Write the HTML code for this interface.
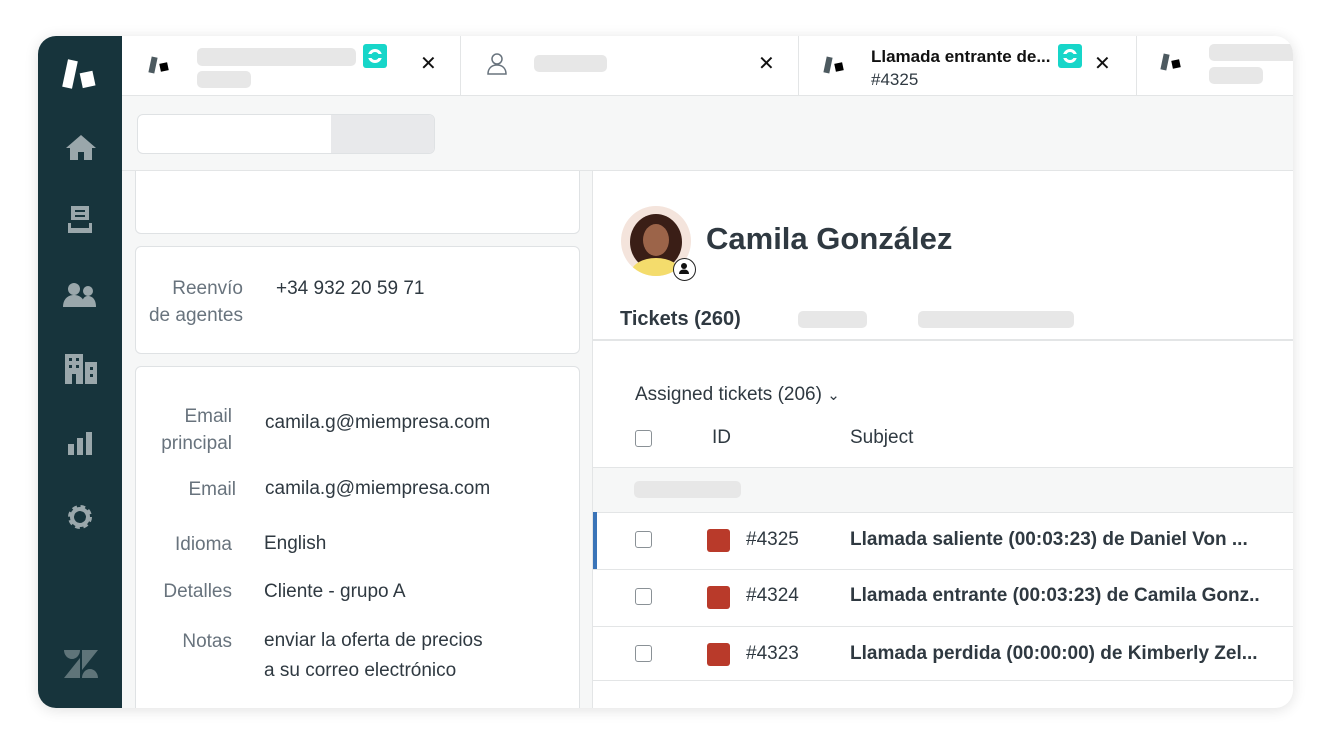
<!DOCTYPE html><html><head><style>
*{margin:0;padding:0;box-sizing:border-box}
body{width:1332px;height:746px;background:#fff;font-family:"Liberation Sans",sans-serif;color:#2f3941;position:relative;overflow:hidden}
.card{position:absolute;left:38px;top:36px;width:1255px;height:672px;border-radius:18px;overflow:hidden;background:#f6f7f7;box-shadow:0 2px 14px rgba(0,0,0,.12)}
.side{position:absolute;left:0;top:0;width:84px;height:672px;background:#17343c;z-index:5}
.abs{position:absolute}
.pill{position:absolute;background:#e7e7e7;border-radius:5px}
.tabs{position:absolute;left:84px;top:0;right:0;height:60px;background:#fff;border-bottom:1px solid #e3e5e6;z-index:4}
.div{position:absolute;top:0;width:1px;height:60px;background:#e3e5e6}
.x{position:absolute;font-size:20px;color:#111}
.lbl{position:absolute;color:#68737d;font-size:19px;text-align:right;line-height:27px}
.val{position:absolute;color:#2f3941;font-size:19px;line-height:30px}
.wc{position:absolute;background:#fff;border:1px solid #dfe2e4;border-radius:6px}
.cb{position:absolute;width:17px;height:17px;border:1.5px solid #8a9196;border-radius:3px;background:#fff}
.red{position:absolute;width:23px;height:23px;background:#b93a2a;border-radius:3px}
.row{position:absolute;left:0;right:0;height:1px;background:#e3e5e6}
.t{position:absolute;font-size:19px;color:#2f3941}
</style></head><body>
<div class="card">
 <div class="side">
  <svg class="abs" style="left:24px;top:22px" width="36" height="34"><rect x="3" y="2" width="10" height="28" fill="#fff" transform="rotate(12 8 16)"/><rect x="19" y="14" width="13" height="15" fill="#fff" transform="rotate(-12 25 21)"/></svg>
  <svg class="abs" style="left:28px;top:98px" width="30" height="28" fill="#9aa7ab"><path d="M15 1L0 14h4v12h8v-8h6v8h8V14h4z"/></svg>
  <svg class="abs" style="left:30px;top:170px" width="24" height="28" fill="#9aa7ab"><path d="M3 0h18v14H3zM0 17h3v5h18v-5h3v10H0z"/><rect x="7" y="4" width="10" height="2" fill="#17343c"/><rect x="7" y="9" width="10" height="2" fill="#17343c"/></svg>
  <svg class="abs" style="left:25px;top:246px" width="34" height="26" fill="#9aa7ab"><circle cx="11" cy="7" r="6"/><path d="M0 25c0-8 5-12 11-12s11 4 11 12z"/><circle cx="25" cy="9" r="5"/><path d="M18 25c1-8 3-11 7-11s8 3 8 11z"/></svg>
  <svg class="abs" style="left:27px;top:318px" width="32" height="30" fill="#9aa7ab"><rect x="0" y="0" width="18" height="30"/><rect x="20" y="8" width="12" height="22"/><g fill="#17343c"><rect x="4" y="4" width="3" height="3"/><rect x="11" y="4" width="3" height="3"/><rect x="4" y="11" width="3" height="3"/><rect x="11" y="11" width="3" height="3"/><rect x="7" y="20" width="4" height="10"/><rect x="25" y="13" width="3" height="3"/><rect x="25" y="20" width="3" height="3"/></g></svg>
  <svg class="abs" style="left:30px;top:396px" width="26" height="24" fill="#9aa7ab"><rect x="0" y="12" width="6" height="11"/><rect x="9" y="6" width="6" height="17"/><rect x="18" y="0" width="6" height="23"/></svg>
  <svg class="abs" style="left:28px;top:467px" width="28" height="28"><circle cx="14" cy="14" r="9" fill="none" stroke="#9aa7ab" stroke-width="6" stroke-dasharray="4 3.1"/><circle cx="14" cy="14" r="8" fill="none" stroke="#9aa7ab" stroke-width="4"/></svg>
  <svg class="abs" style="left:24px;top:612px" width="38" height="32" fill="#5f7479"><path d="M2 2h16c0 5-3.6 9-8 9S2 7 2 2zM20 2h16L20 22zM2 30L18 10v20zM20 30c0-5 3.6-9 8-9s8 4 8 9z"/></svg>
 </div>
 <div class="tabs">
  <svg class="abs" style="left:26px;top:19px" width="24" height="22"><rect x="2" y="2" width="6" height="16" fill="#4d5a60" transform="rotate(12 5 10)"/><rect x="12" y="8" width="8" height="8" fill="#000" transform="rotate(-12 16 12)"/></svg>
  <div class="pill" style="left:75px;top:12px;width:159px;height:18px"></div>
  <div class="pill" style="left:75px;top:35px;width:54px;height:17px"></div>
  <div class="abs" style="left:241px;top:8px;width:24px;height:24px;background:#17d6c9;border-radius:3px"><div style="position:absolute;left:5px;top:5px;width:14px;height:14px;border:3px solid #fff;border-radius:50%"></div><div style="position:absolute;left:4px;top:10px;width:16px;height:4px;background:#17d6c9"></div></div>
  <div class="x" style="left:298px;top:15px">✕</div>
  <div class="div" style="left:338px"></div>
  <svg class="abs" style="left:364px;top:16px" width="22" height="24" fill="none" stroke="#68737d" stroke-width="1.5"><circle cx="11" cy="7" r="5"/><path d="M2 22c0-6 4-9 9-9s9 3 9 9z"/></svg>
  <div class="pill" style="left:412px;top:19px;width:73px;height:17px"></div>
  <div class="x" style="left:636px;top:15px">✕</div>
  <div class="div" style="left:676px"></div>
  <svg class="abs" style="left:701px;top:19px" width="24" height="22"><rect x="2" y="2" width="6" height="16" fill="#4d5a60" transform="rotate(12 5 10)"/><rect x="12" y="8" width="8" height="8" fill="#000" transform="rotate(-12 16 12)"/></svg>
  <div class="abs" style="left:749px;top:11px;font-size:17px;color:#111;font-weight:bold">Llamada entrante de...</div>
  <div class="abs" style="left:749px;top:34px;font-size:17px;color:#2f3941">#4325</div>
  <div class="abs" style="left:936px;top:8px;width:24px;height:24px;background:#17d6c9;border-radius:3px"><div style="position:absolute;left:5px;top:5px;width:14px;height:14px;border:3px solid #fff;border-radius:50%"></div><div style="position:absolute;left:4px;top:10px;width:16px;height:4px;background:#17d6c9"></div></div>
  <div class="x" style="left:972px;top:15px">✕</div>
  <div class="div" style="left:1014px"></div>
  <svg class="abs" style="left:1038px;top:16px" width="24" height="22"><rect x="2" y="2" width="6" height="16" fill="#4d5a60" transform="rotate(12 5 10)"/><rect x="12" y="8" width="8" height="8" fill="#000" transform="rotate(-12 16 12)"/></svg>
  <div class="pill" style="left:1087px;top:8px;width:90px;height:17px"></div>
  <div class="pill" style="left:1087px;top:31px;width:54px;height:17px"></div>
 </div>
 <div class="abs" style="left:84px;top:60px;right:0;height:75px;background:#f6f7f7;border-bottom:1px solid #e3e5e6;z-index:3">
  <div class="abs" style="left:15px;top:18px;width:298px;height:40px;border:1px solid #dfe2e4;border-radius:6px;background:#fff;overflow:hidden"><div style="position:absolute;left:193px;top:0;right:0;bottom:0;background:#e8e9eb"></div></div>
 </div>
 <!-- left column -->
 <div class="wc" style="left:97px;top:120px;width:445px;height:78px"></div>
 <div class="wc" style="left:97px;top:210px;width:445px;height:108px"></div>
 <div class="lbl" style="left:100px;top:239px;width:105px">Reenvío<br>de agentes</div>
 <div class="val" style="left:238px;top:238px">+34 932 20 59 71</div>
 <div class="wc" style="left:97px;top:330px;width:445px;height:360px"></div>
 <div class="lbl" style="left:90px;top:367px;width:104px">Email<br>principal</div>
 <div class="val" style="left:227px;top:372px">camila.g@miempresa.com</div>
 <div class="lbl" style="left:90px;top:440px;width:108px">Email</div>
 <div class="val" style="left:227px;top:438px">camila.g@miempresa.com</div>
 <div class="lbl" style="left:90px;top:495px;width:104px">Idioma</div>
 <div class="val" style="left:226px;top:493px">English</div>
 <div class="lbl" style="left:90px;top:542px;width:104px">Detalles</div>
 <div class="val" style="left:226px;top:541px">Cliente - grupo A</div>
 <div class="lbl" style="left:90px;top:592px;width:104px">Notas</div>
 <div class="val" style="left:226px;top:590px">enviar la oferta de precios<br>a su correo electrónico</div>
 <!-- right panel -->
 <div class="abs" style="left:554px;top:135px;right:0;bottom:0;background:#fff;border-left:1px solid #e3e5e6">
  <div class="abs" style="left:28px;top:35px;width:70px;height:70px;border-radius:50%;background:#f4e4dc;overflow:hidden">
   <div style="position:absolute;left:9px;top:8px;width:52px;height:56px;border-radius:50%;background:#3a1e16"></div>
   <div style="position:absolute;left:22px;top:18px;width:26px;height:32px;border-radius:50%;background:#9c6449"></div>
   <div style="position:absolute;left:10px;top:52px;width:50px;height:30px;border-radius:50%;background:#f4dc6c"></div>
  </div>
  <div class="abs" style="left:80px;top:87px;width:23px;height:23px;border-radius:50%;background:#fff;border:1.5px solid #222"><svg width="20" height="20" style="position:absolute;left:0;top:0"><circle cx="10" cy="7" r="3" fill="#111"/><path d="M5 15c0-3 2-4.5 5-4.5s5 1.5 5 4.5z" fill="#111"/></svg></div>
  <div class="abs" style="left:113px;top:50px;font-size:31px;font-weight:bold;color:#2f3941">Camila González</div>
  <div class="abs" style="left:27px;top:137px;font-size:20px;font-weight:bold;color:#2f3941">Tickets (260)</div>
  <div class="pill" style="left:205px;top:140px;width:69px;height:17px"></div>
  <div class="pill" style="left:325px;top:140px;width:156px;height:17px"></div>
  <div class="row" style="top:168px;height:2px"></div>
  <div class="t" style="left:42px;top:213px">Assigned tickets (206) <span style="font-size:15px">⌄</span></div>
  <div class="cb" style="left:42px;top:259px"></div>
  <div class="t" style="left:119px;top:256px">ID</div>
  <div class="t" style="left:257px;top:256px">Subject</div>
  <div class="abs" style="left:0;right:0;top:296px;height:46px;background:#f6f7f7;border-top:1px solid #e3e5e6;border-bottom:1px solid #e3e5e6"></div>
  <div class="pill" style="left:41px;top:310px;width:107px;height:17px"></div>
  <div class="abs" style="left:0;top:341px;width:4px;height:57px;background:#3a74b8"></div>
  <div class="cb" style="left:42px;top:360px"></div><div class="red" style="left:114px;top:358px"></div>
  <div class="t" style="left:153px;top:358px">#4325</div>
  <div class="t" style="left:257px;top:358px;font-weight:bold">Llamada saliente (00:03:23) de Daniel Von ...</div>
  <div class="row" style="top:398px"></div>
  <div class="cb" style="left:42px;top:417px"></div><div class="red" style="left:114px;top:415px"></div>
  <div class="t" style="left:153px;top:414px">#4324</div>
  <div class="t" style="left:257px;top:414px;font-weight:bold">Llamada entrante (00:03:23) de Camila Gonz..</div>
  <div class="row" style="top:455px"></div>
  <div class="cb" style="left:42px;top:474px"></div><div class="red" style="left:114px;top:472px"></div>
  <div class="t" style="left:153px;top:472px">#4323</div>
  <div class="t" style="left:257px;top:472px;font-weight:bold">Llamada perdida (00:00:00) de Kimberly Zel...</div>
  <div class="row" style="top:509px"></div>
 </div>
</div>
</body></html>
